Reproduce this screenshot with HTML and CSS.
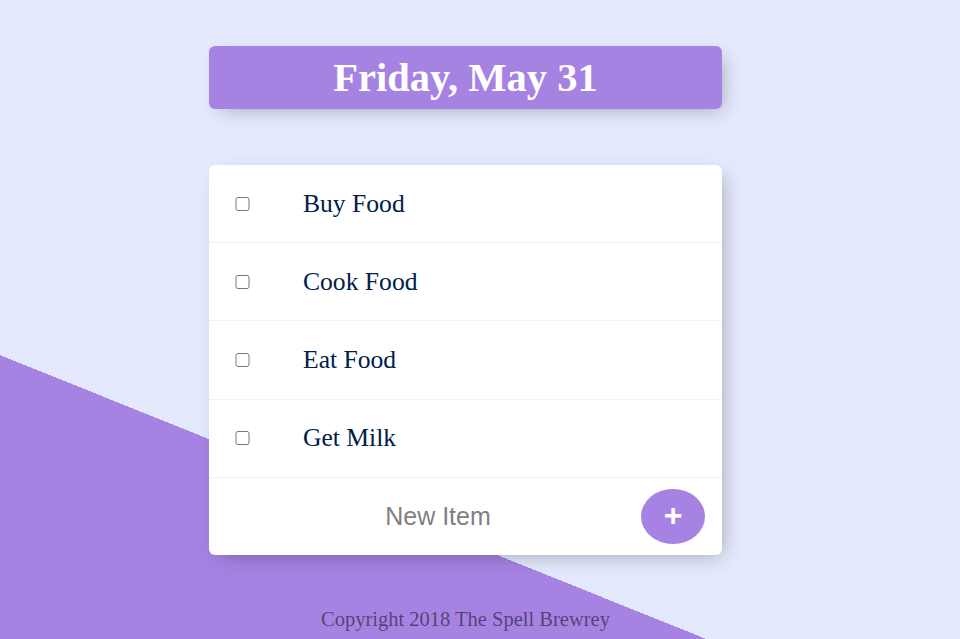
FILE: index.html
```html
<!DOCTYPE html>
<html lang="en">
<head>
<meta charset="utf-8">
<title>To-Do List</title>
<link rel="stylesheet" href="styles.css">
</head>
<body>
  <div class="box heading">
    <h1 class="title">Friday, May 31</h1>
  </div>
  <div class="box list">
    <div class="item">
      <input type="checkbox" class="check">
      <p class="label">Buy Food</p>
    </div>
    <div class="item">
      <input type="checkbox" class="check">
      <p class="label">Cook Food</p>
    </div>
    <div class="item">
      <input type="checkbox" class="check">
      <p class="label">Eat Food</p>
    </div>
    <div class="item">
      <input type="checkbox" class="check">
      <p class="label">Get Milk</p>
    </div>
    <form class="item add-form" onsubmit="return false">
      <input type="text" class="new-item" name="newItem" placeholder="New Item" autocomplete="off">
      <button type="submit" class="add-btn">+</button>
    </form>
  </div>
  <footer class="footer">Copyright 2018 The Spell Brewrey</footer>
</body>
</html>
```

FILE: styles.css
```css
html {
  height: 100%;
  background-color: #E4E9FD;
  background-image: linear-gradient(21.9deg, #A683E3 27.7%, #E4E9FD 27.7%);
}

body {
  margin: 0;
  height: 100%;
  padding-top: 46px;
  box-sizing: border-box;
  font-family: "Liberation Serif", "Times New Roman", serif;
}

.box {
  width: 513px;
  margin-left: 209px;
  background: #fff;
  border-radius: 6px;
  box-shadow: 6px 6px 19px -6px rgba(0, 0, 0, 0.3);
}

.heading {
  background-color: #A683E3;
  height: 63px;
  text-align: center;
}

.title {
  margin: 0;
  color: #fff;
  font-size: 40.5px;
  font-weight: bold;
  line-height: 63px;
}

.list {
  margin-top: 56px;
  display: flex;
  flex-direction: column;
}

.item {
  height: 78.2px;
  box-sizing: border-box;
  display: flex;
  align-items: center;
  border-bottom: 1px solid #F1F1F1;
}

.item:last-child {
  border-bottom: 0;
  height: 77px;
}

.check {
  width: 15px;
  height: 14px;
  margin: 0 0 0 26px;
  flex: none;
}

.label {
  margin: 0 0 0 53px;
  font-size: 25.6px;
  color: #00204a;
}

.add-form {
  margin: 0;
}

.new-item {
  margin: 0 0 0 26px;
  padding: 0;
  width: 406px;
  height: 60px;
  border: none;
  background: transparent;
  text-align: center;
  font-family: "Liberation Sans", Arial, sans-serif;
  font-size: 25px;
  color: #333;
}

.new-item::placeholder {
  color: grey;
  opacity: 1;
}

.new-item:focus {
  outline: none;
}

.add-btn {
  width: 64px;
  height: 55px;
  margin: 0 16px 0 0;
  padding: 0 0 3px;
  border: 0;
  border-radius: 50%;
  background-color: #A683E3;
  color: #fff;
  font-family: "Liberation Sans", Arial, sans-serif;
  font-size: 32px;
  font-weight: bold;
  line-height: 1;
}

.footer {
  margin-top: 53px;
  width: 513px;
  margin-left: 209px;
  text-align: center;
  font-size: 20.5px;
  color: rgba(0, 0, 0, 0.5);
}
```
